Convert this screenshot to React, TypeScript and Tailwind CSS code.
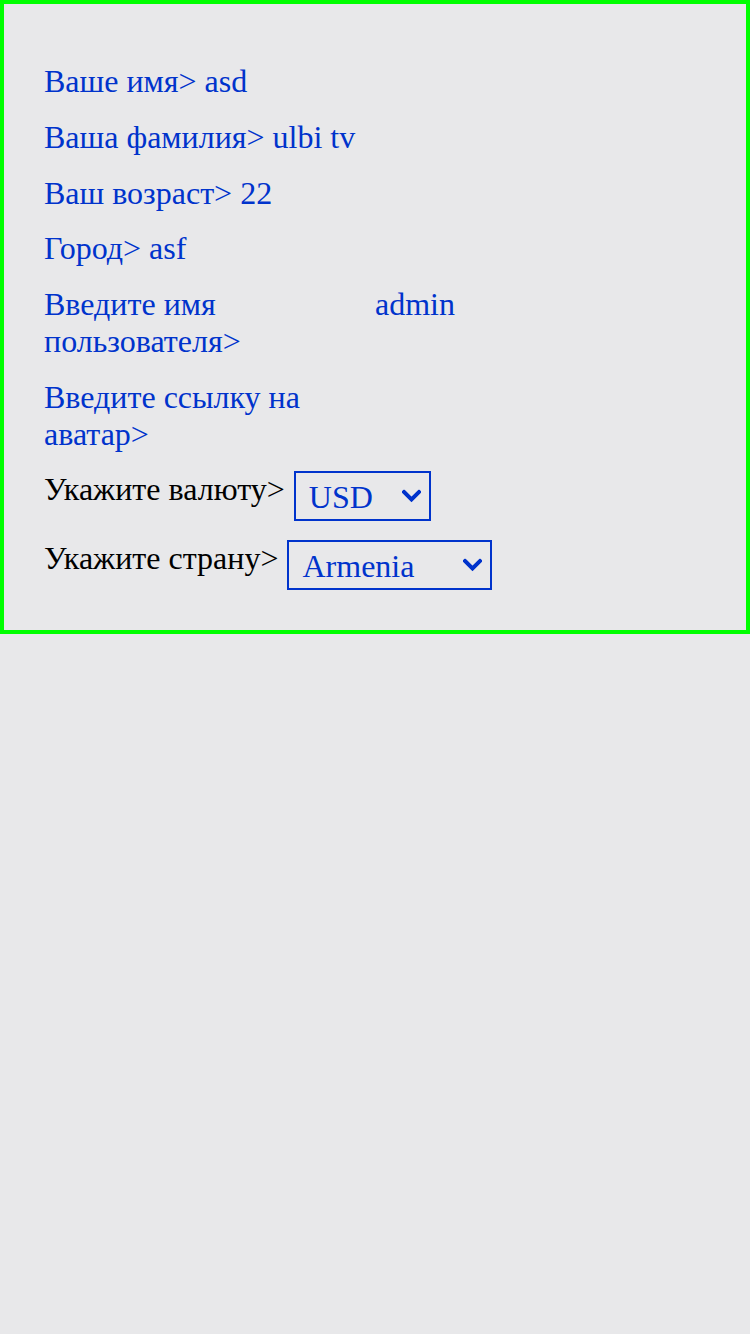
import React, { useState } from 'react';

const Chevron = () => (
  <svg
    className="pointer-events-none absolute top-1/2 -translate-y-1/2 right-[10px] w-[19px] h-[13px]"
    viewBox="0 0 19 13"
    fill="none"
  >
    <path d="M2 2.5l7.5 7.5L17 2.5" stroke="#0033cc" strokeWidth={4} strokeLinecap="square" strokeLinejoin="miter" />
  </svg>
);

const TextRow: React.FC<{ label: string; value: string }> = ({ label, value }) => (
  <div className="text-[#0033cc]">
    {label} {value}
  </div>
);

const InputRow: React.FC<{ label: string; value: string }> = ({ label, value }) => (
  <div className="flex items-start text-[#0033cc]">
    <div className="w-1/2">{label}</div>
    <input
      readOnly
      value={value}
      className="w-1/2 bg-transparent outline-none text-[#0033cc] p-0 leading-[inherit]"
    />
  </div>
);

const SelectRow: React.FC<{ label: string; options: string[]; width: string }> = ({ label, options, width }) => {
  const [val, setVal] = useState(options[0]);
  return (
    <div className="flex items-start gap-[9px]">
      <div className="text-black">{label}</div>
      <div className={`relative ${width}`}>
        <select
          value={val}
          onChange={(e) => setVal(e.target.value)}
          className="w-full h-[50px] appearance-none bg-transparent border-2 border-[#0033cc] text-[#0033cc] pl-[13px] pt-[2px] outline-none rounded-none"
        >
          {options.map((o) => (
            <option key={o}>{o}</option>
          ))}
        </select>
        <Chevron />
      </div>
    </div>
  );
};

export default function App() {
  return (
    <div className="min-h-[1334px] bg-[#e8e8ea] font-['Liberation_Serif','Times_New_Roman',serif] text-[32px] leading-[1.15]">
      <div className="border-4 border-[#00ff00] px-10 pt-10 pb-10">
        <div className="flex flex-col gap-[19px] pt-[19px]">
          <TextRow label="Ваше имя>" value="asd" />
          <TextRow label="Ваша фамилия>" value="ulbi tv" />
          <TextRow label="Ваш возраст>" value="22" />
          <TextRow label="Город>" value="asf" />
          <InputRow label="Введите имя пользователя>" value="admin" />
          <InputRow label="Введите ссылку на аватар>" value="" />
          <SelectRow label="Укажите валюту>" options={['USD', 'EUR', 'RUB']} width="w-[137px]" />
          <SelectRow label="Укажите страну>" options={['Armenia', 'Russia', 'Belarus']} width="w-[205px]" />
        </div>
      </div>
    </div>
  );
}
